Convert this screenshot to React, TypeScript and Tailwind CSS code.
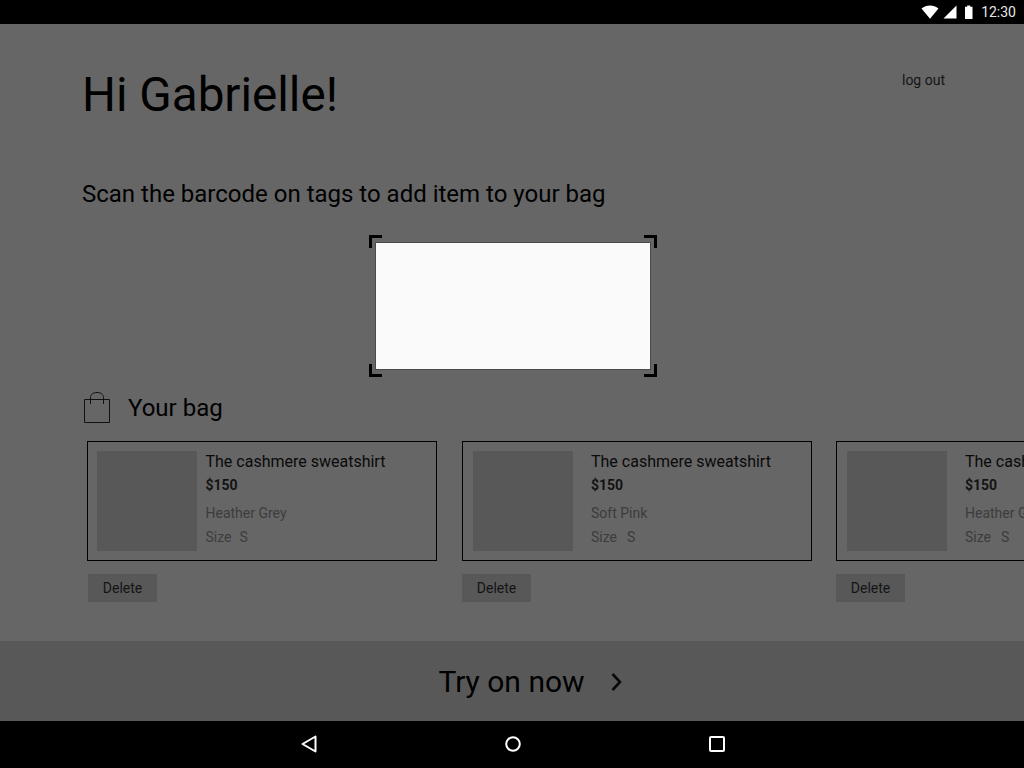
import React from "react";

function Card({ color, imgMl, textMl, shift, delMl, sizeGap }: { color: string; imgMl: string; textMl: string; shift: string; delMl: string; sizeGap: string }) {
  return (
    <div className={`w-[350px] shrink-0 flex flex-col items-start ${shift}`}>
      <div className="w-[350px] h-[120px] border border-black flex">
        <div className={`w-[100px] h-[100px] mt-[9px] bg-[#585858] shrink-0 ${imgMl}`} />
        <div className={`flex flex-col whitespace-nowrap ${textMl}`}>
          <div className="text-[16px] leading-[20px] mt-[10px] text-[#0a0a0a]">The cashmere sweatshirt</div>
          <div className="text-[14px] leading-[20px] mt-[3px] font-bold text-[#141414]">$150</div>
          <div className="text-[14px] leading-[20px] mt-[8px] text-[#3c3c3c]">{color}</div>
          <div className={`text-[14px] leading-[20px] mt-[4px] text-[#3c3c3c] flex ${sizeGap}`}>
            <span>Size</span>
            <span>S</span>
          </div>
        </div>
      </div>
      <div className={`mt-[13px] w-[69px] h-[28px] bg-[#585858] flex items-center justify-center text-[14px] text-[#141414] ${delMl}`}>
        Delete
      </div>
    </div>
  );
}

function Corner({ cls, d }: { cls: string; d: string }) {
  return (
    <svg className={`absolute w-[13px] h-[13px] ${cls}`} viewBox="0 0 13 13" fill="none" stroke="#000" strokeWidth="3">
      <path d={d} />
    </svg>
  );
}

export default function App() {
  return (
    <div
      className="w-[1024px] h-[768px] overflow-hidden flex flex-col bg-[#666666] text-black"
      style={{ fontFamily: "Roboto, sans-serif" }}
    >
      <div className="h-[24px] bg-black shrink-0 flex items-center justify-end pr-[8px] text-[14px] text-[#e6e6e6]">
        <svg width="18" height="14" viewBox="0 0 18 14" className="mr-[2px]">
          <path d="M0.5 3.6C3 1.6 5.8 0.5 9 0.5s6 1.1 8.5 3.1L9 13.8z" fill="#fff" />
        </svg>
        <svg width="14" height="14" viewBox="0 0 14 14" className="ml-[2px]">
          <path d="M0.5 13.5L13.5 0.5V13.5z" fill="#fff" />
        </svg>
        <svg width="10" height="14" viewBox="0 0 10 14" className="ml-[7px]">
          <path d="M3.2 0.5h3v1.2H8.5V14h-7.5V1.7h2.2z" fill="#fff" />
        </svg>
        <span className="ml-[7px] leading-[24px]">12:30</span>
      </div>

      <div className="flex-1 flex flex-col min-h-0">
        <div className="flex items-start pl-[82px] pr-[79px]">
          <h1 className="text-[47.6px] leading-[56px] mt-[43px] text-black">Hi Gabrielle!</h1>
          <span className="ml-auto mt-[46px] text-[14px] leading-[20px] text-[#141414]">log out</span>
        </div>
        <p className="pl-[82px] mt-[53px] text-[24px] leading-[36px] text-black">
          Scan the barcode on tags to add item to your bag
        </p>

        <div className="flex justify-center mt-[30px] pl-[2px]">
          <div className="relative w-[276px] h-[128px] border border-[#4a4a4a] bg-[#fafafa] box-border">
            <Corner cls="left-[-7px] top-[-8px]" d="M1.5 13V1.5H13" />
            <Corner cls="right-[-7px] top-[-8px]" d="M0 1.5H11.5V13" />
            <Corner cls="left-[-7px] bottom-[-8px]" d="M1.5 0V11.5H13" />
            <Corner cls="right-[-7px] bottom-[-8px]" d="M0 11.5H11.5V0" />
          </div>
        </div>

        <div className="flex items-center pl-[84px] mt-[21px] h-[34px]">
          <svg width="26" height="32" viewBox="0 0 26 32" fill="none" stroke="#111" strokeWidth="1" className="shrink-0">
            <path d="M0.5 7.5H25.5V30.5H0.5z" />
            <path d="M6.5 12V5.5C6.5 2.5 9 0.5 13 0.5S19.5 2.5 19.5 5.5V12" />
          </svg>
          <span className="ml-[18px] text-[24px] leading-[32px] text-black">Your bag</span>
        </div>

        <div className="flex pl-[87px] mt-[16px] gap-[25px] overflow-hidden">
          <Card color="Heather Grey" imgMl="ml-[9px]" textMl="ml-[8.5px]" shift="" delMl="ml-[1px]" sizeGap="gap-[8px]" />
          <Card color="Soft Pink" imgMl="ml-[10px]" textMl="ml-[18px]" shift="" delMl="" sizeGap="gap-[10px]" />
          <Card color="Heather Grey" imgMl="ml-[10px]" textMl="ml-[18px]" shift="-ml-[1px]" delMl="" sizeGap="gap-[10px]" />
        </div>

        <div className="mt-auto h-[80px] shrink-0 bg-[#585858] flex items-center justify-center pl-[38px]">
          <span className="text-[30px] leading-[40px] text-black mt-[2px]">Try on now</span>
          <svg width="14" height="20" viewBox="0 0 14 20" fill="none" stroke="#0a0a0a" strokeWidth="2.6" className="ml-[25px] mt-[2px]">
            <path d="M2.5 2L10 10L2.5 18" />
          </svg>
        </div>
      </div>

      <div className="h-[47px] bg-black shrink-0 flex items-center justify-center pl-[2px] pb-[1px]">
        <svg width="16" height="18" viewBox="0 0 16 18" fill="none" stroke="#fff" strokeWidth="2" strokeLinejoin="round">
          <path d="M14.5 1.5V16.5L1.5 9z" />
        </svg>
        <svg width="16" height="16" viewBox="0 0 16 16" fill="none" stroke="#fff" strokeWidth="2" className="ml-[188px]">
          <circle cx="8" cy="8" r="6.8" />
        </svg>
        <svg width="16" height="16" viewBox="0 0 16 16" fill="none" stroke="#fff" strokeWidth="2" className="ml-[188px]">
          <rect x="1" y="1" width="14" height="14" rx="1" />
        </svg>
      </div>
    </div>
  );
}
